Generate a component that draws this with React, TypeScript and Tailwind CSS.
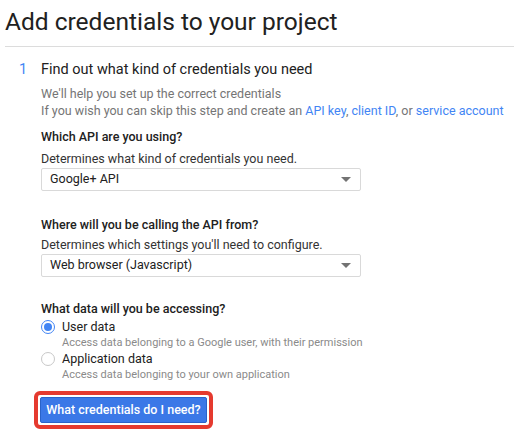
const Select = ({ value }: { value: string }) => (
  <div className="flex h-[23px] w-[320px] items-center justify-between rounded-[2px] border border-[#d9d9d9] bg-white pl-[8px] pr-[8px] text-[12.5px] text-[#212121]">
    <span>{value}</span>
    <svg width="10" height="5" viewBox="0 0 10 5" className="mr-[1px]">
      <path d="M0 0h10L5 5z" fill="#737373" />
    </svg>
  </div>
);

const Radio = ({
  checked,
  label,
  hint,
}: {
  checked?: boolean;
  label: string;
  hint: string;
}) => (
  <div className="flex flex-col">
    <div className="flex h-[16px] items-center gap-[7px]">
      <span
        className={`flex h-[14px] w-[14px] items-center justify-center rounded-full border ${
          checked ? "border-[#4285f4]" : "border-[#c8c8c8]"
        }`}
      >
        {checked && <span className="h-[8px] w-[8px] rounded-full bg-[#4285f4]" />}
      </span>
      <span className="text-[12.5px] text-[#212121]">{label}</span>
    </div>
    <p className="ml-[21px] text-[11px] leading-[16px] text-[#8a8a8a]">{hint}</p>
  </div>
);

export default function App() {
  return (
    <div
      className="h-[442px] w-[514px] overflow-hidden bg-white"
      style={{ fontFamily: "Roboto, 'Liberation Sans', sans-serif" }}
    >
      <h1 className="pl-[5px] pt-[5px] text-[24.5px] leading-[34px] text-[#212121]">
        Add credentials to your project
      </h1>
      <div className="ml-[5px] mt-[7px] border-t border-[#dcdcdc]" />

      <div className="mt-[13px] flex">
        <div className="w-[41px] pl-[19px] text-[14.5px] leading-[20px] text-[#4285f4]">1</div>
        <div className="flex-1">
          <h2 className="text-[14.5px] leading-[20px] text-[#212121]">
            Find out what kind of credentials you need
          </h2>

          <div className="mt-[5px] text-[12.5px] leading-[17px] text-[#757575]">
            <p>We'll help you set up the correct credentials</p>
            <p>
              If you wish you can skip this step and create an{" "}
              <span className="text-[#4285f4]">API key</span>,{" "}
              <span className="text-[#4285f4]">client ID</span>, or{" "}
              <span className="text-[#4285f4]">service account</span>
            </p>
          </div>

          <div className="mt-[9px]">
            <h3 className="text-[12.5px] font-medium leading-[18px] text-[#212121]">
              Which API are you using?
            </h3>
            <p className="mt-[4px] text-[12.5px] leading-[18px] text-[#333]">
              Determines what kind of credentials you need.
            </p>
            <Select value="Google+ API" />
          </div>

          <div className="mt-[25px]">
            <h3 className="text-[12.5px] font-medium leading-[18px] text-[#212121]">
              Where will you be calling the API from?
            </h3>
            <p className="mt-[2px] text-[12.5px] leading-[18px] text-[#333]">
              Determines which settings you'll need to configure.
            </p>
            <Select value="Web browser (Javascript)" />
          </div>

          <div className="mt-[23px]">
            <h3 className="text-[12.5px] font-medium leading-[18px] text-[#212121]">
              What data will you be accessing?
            </h3>
            <div className="mt-[1px] flex flex-col">
              <Radio
                checked
                label="User data"
                hint="Access data belonging to a Google user, with their permission"
              />
              <Radio label="Application data" hint="Access data belonging to your own application" />
            </div>
          </div>

          <div className="ml-[-7px] mt-[8px] inline-flex rounded-[6px] border-[4px] border-[#e53a2f] p-[2px]">
            <button className="h-[26px] w-[167px] rounded-[2px] border border-[#2a63c9] bg-[#3b78e7] text-[12.5px] font-medium text-white">
              What credentials do I need?
            </button>
          </div>
        </div>
      </div>
    </div>
  );
}
